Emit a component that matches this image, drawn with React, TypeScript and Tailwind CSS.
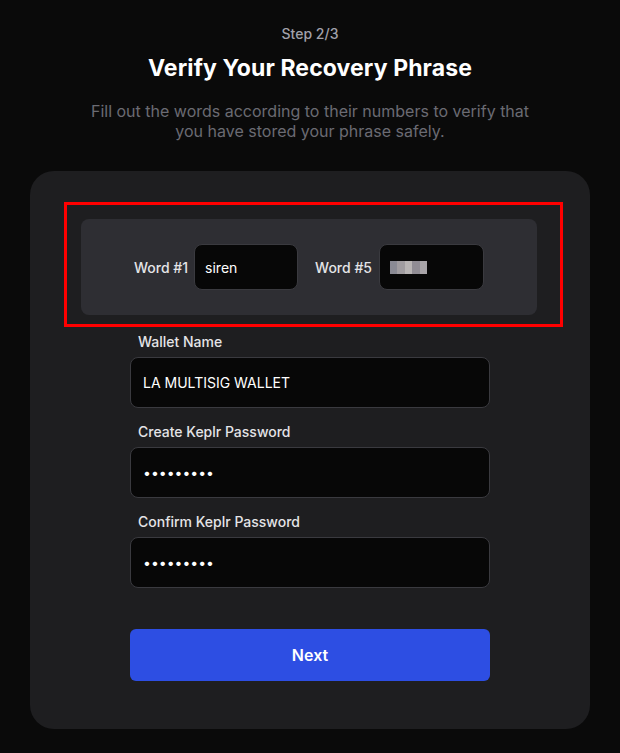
import React from "react";

const font = { fontFamily: "Inter, 'Noto Sans', sans-serif" };

function Field({ label, value, password }: { label: string; value: string; password?: boolean }) {
  return (
    <div className="flex flex-col">
      <div className="px-2 text-[14px] leading-5 font-medium text-[#e4e4e7] mb-[5px]">{label}</div>
      <div className="h-[51px] w-[360px] rounded-lg border border-[#3a3a3f] bg-[#070707] flex items-center px-3">
        {password ? (
          <span className="text-white text-[14px]">•••••••••</span>
        ) : (
          <span className="text-white text-[14px]">{value}</span>
        )}
      </div>
    </div>
  );
}

export default function App() {
  return (
    <div className="min-h-[753px] w-[620px] bg-[#0a0a0a] flex flex-col items-center" style={font}>
      <div className="pt-[24px] text-[14px] leading-5 font-medium text-[#a1a1aa]">Step 2/3</div>
      <div className="mt-[10px] text-[23px] leading-7 font-bold text-white tracking-[0.1px]">
        Verify Your Recovery Phrase
      </div>
      <div className="mt-[19px] w-[450px] text-center text-[16px] leading-5 text-[#6b6b73]">
        Fill out the words according to their numbers to verify that you have stored your phrase safely.
      </div>
      <div className="mt-[30px] w-[560px] rounded-[24px] bg-[#1e1e20] px-[35px] pt-[31px] pb-[48px] flex flex-col items-center">
        <div className="self-start ml-[-1px] w-[499px] border-[3px] border-[#ff0000] pl-[14px] pr-[23px] pt-[14px] pb-[9px]">
          <div className="h-[96px] rounded-lg bg-[#2e2e33] flex items-center justify-center">
            <div className="flex items-center">
              <span className="text-[14px] font-medium text-[#e4e4e7] mr-[6px]">Word #1</span>
              <div className="h-[46px] w-[104px] rounded-lg border border-[#3a3a3f] bg-[#070707] flex items-center px-[10px]">
                <span className="text-white text-[14px]">siren</span>
              </div>
              <span className="ml-[17px] text-[14px] font-medium text-[#e4e4e7] mr-[7px]">Word #5</span>
              <div className="h-[46px] w-[105px] rounded-lg border border-[#3a3a3f] bg-[#070707] flex items-center px-[10px]">
                <div className="flex h-[13px] w-[37px]">
                  <div className="flex-1 bg-[#8a8a94]" />
                  <div className="flex-1 bg-[#a09ca0]" />
                  <div className="flex-1 bg-[#b8b4b4]" />
                  <div className="flex-1 bg-[#908c94]" />
                  <div className="flex-1 bg-[#a8a4a8]" />
                </div>
              </div>
            </div>
          </div>
        </div>
        <div className="mt-[5px] flex flex-col gap-[14px]">
          <Field label="Wallet Name" value="LA MULTISIG WALLET" />
          <Field label="Create Keplr Password" value="" password />
          <Field label="Confirm Keplr Password" value="" password />
        </div>
        <button className="mt-[41px] h-[52px] w-[360px] rounded-md bg-[#2d4ee3] text-white text-[16px] font-semibold">
          Next
        </button>
      </div>
    </div>
  );
}
